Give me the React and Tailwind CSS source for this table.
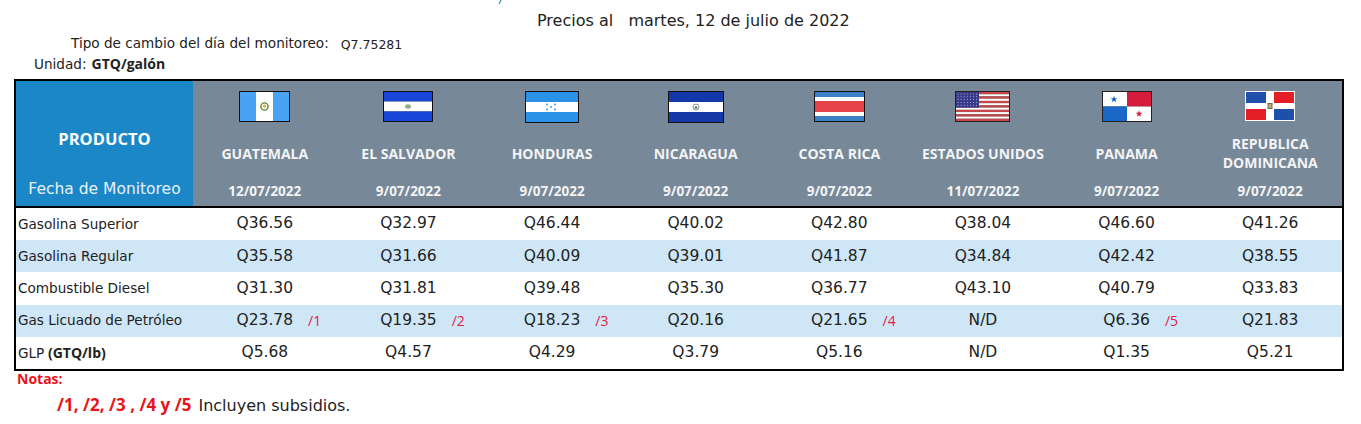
import React from 'react';

const countries = [
  { name: 'GUATEMALA', date: '12/07/2022', flag: 'gt' },
  { name: 'EL SALVADOR', date: '9/07/2022', flag: 'sv' },
  { name: 'HONDURAS', date: '9/07/2022', flag: 'hn' },
  { name: 'NICARAGUA', date: '9/07/2022', flag: 'ni' },
  { name: 'COSTA RICA', date: '9/07/2022', flag: 'cr' },
  { name: 'ESTADOS UNIDOS', date: '11/07/2022', flag: 'us' },
  { name: 'PANAMA', date: '9/07/2022', flag: 'pa' },
  { name: 'REPUBLICA DOMINICANA', date: '9/07/2022', flag: 'do', twoLines: true },
];

const rows = [
  { label: 'Gasolina Superior', values: ['Q36.56', 'Q32.97', 'Q46.44', 'Q40.02', 'Q42.80', 'Q38.04', 'Q46.60', 'Q41.26'] },
  { label: 'Gasolina Regular', values: ['Q35.58', 'Q31.66', 'Q40.09', 'Q39.01', 'Q41.87', 'Q34.84', 'Q42.42', 'Q38.55'], shaded: true },
  { label: 'Combustible Diesel', values: ['Q31.30', 'Q31.81', 'Q39.48', 'Q35.30', 'Q36.77', 'Q43.10', 'Q40.79', 'Q33.83'] },
  {
    label: 'Gas Licuado de Petróleo',
    values: ['Q23.78', 'Q19.35', 'Q18.23', 'Q20.16', 'Q21.65', 'N/D', 'Q6.36', 'Q21.83'],
    notes: ['/1', '/2', '/3', null, '/4', null, '/5', null],
    shaded: true,
  },
  { label: 'GLP', unit: '(GTQ/lb)', values: ['Q5.68', 'Q4.57', 'Q4.29', 'Q3.79', 'Q5.16', 'N/D', 'Q1.35', 'Q5.21'] },
];

function Flag({ code }) {
  if (code === 'gt') {
    return (
      <svg width="51" height="31" viewBox="0 0 51 31">
        <rect width="51" height="31" fill="#111" />
        <rect x="1" y="1" width="16" height="29" fill="#4aa2f5" />
        <rect x="17" y="1" width="17" height="29" fill="#fff" />
        <rect x="34" y="1" width="16" height="29" fill="#4aa2f5" />
        <circle cx="25.5" cy="15.5" r="3.6" fill="none" stroke="#5a8a2a" strokeWidth="1.4" />
        <circle cx="25.5" cy="15.3" r="1.7" fill="#d9b54a" />
      </svg>
    );
  }
  if (code === 'sv') {
    return (
      <svg width="50" height="31" viewBox="0 0 50 31">
        <rect width="50" height="31" fill="#111" />
        <rect x="1" y="1" width="48" height="9.5" fill="#1846d8" />
        <rect x="1" y="10.5" width="48" height="10" fill="#fff" />
        <rect x="1" y="20.5" width="48" height="9.5" fill="#1846d8" />
        <ellipse cx="25" cy="15.5" rx="3" ry="2.2" fill="#8fae8a" />
      </svg>
    );
  }
  if (code === 'hn') {
    return (
      <svg width="54" height="32" viewBox="0 0 54 32">
        <rect width="54" height="32" fill="#111" />
        <rect x="1" y="1" width="52" height="10" fill="#2a93e8" />
        <rect x="1" y="11" width="52" height="10" fill="#fff" />
        <rect x="1" y="21" width="52" height="10" fill="#2a93e8" />
        {[[22, 13.5], [30, 13.5], [26, 16], [22, 18.5], [30, 18.5]].map(([x, y]) => (
          <circle key={`${x}-${y}`} cx={x} cy={y} r="0.9" fill="#2a93e8" />
        ))}
      </svg>
    );
  }
  if (code === 'ni') {
    return (
      <svg width="56" height="32" viewBox="0 0 56 32">
        <rect width="56" height="32" fill="#111" />
        <rect x="1" y="1" width="54" height="10" fill="#1538a8" />
        <rect x="1" y="11" width="54" height="10" fill="#fff" />
        <rect x="1" y="21" width="54" height="10" fill="#1538a8" />
        <circle cx="28" cy="16" r="3" fill="none" stroke="#8a8a6a" strokeWidth="0.9" />
        <path d="M26 17.4 L28 14.4 L30 17.4 Z" fill="#4a7a9a" />
      </svg>
    );
  }
  if (code === 'cr') {
    return (
      <svg width="51" height="31" viewBox="0 0 51 31">
        <rect width="51" height="31" fill="#111" />
        <rect x="1" y="1" width="49" height="5" fill="#3b7fc4" />
        <rect x="1" y="6" width="49" height="4" fill="#fff" />
        <rect x="1" y="10" width="49" height="11" fill="#e4434a" />
        <rect x="1" y="21" width="49" height="4" fill="#fff" />
        <rect x="1" y="25" width="49" height="5" fill="#3b7fc4" />
      </svg>
    );
  }
  if (code === 'us') {
    return (
      <svg width="55" height="31" viewBox="0 0 55 31">
        <rect width="55" height="31" fill="#222" />
        {Array.from({ length: 13 }).map((_, i) => (
          <rect key={i} x="1" y={1 + i * (29 / 13)} width="53" height={29 / 13} fill={i % 2 === 0 ? '#c8464a' : '#fff'} />
        ))}
        <rect x="1" y="1" width="23" height="15.6" fill="#3a3a8a" />
        {Array.from({ length: 5 }).map((_, r) =>
          Array.from({ length: 7 }).map((_, c) => (
            <circle key={`${r}-${c}`} cx={3 + c * 3.1} cy={3 + r * 2.8} r="0.5" fill="#c9c9ee" />
          ))
        )}
      </svg>
    );
  }
  if (code === 'pa') {
    return (
      <svg width="50" height="31" viewBox="0 0 50 31">
        <rect width="50" height="31" fill="#222" />
        <rect x="1" y="1" width="24" height="14.5" fill="#fff" />
        <rect x="25" y="1" width="24" height="14.5" fill="#d61b3c" />
        <rect x="1" y="15.5" width="24" height="14.5" fill="#1a68c6" />
        <rect x="25" y="15.5" width="24" height="14.5" fill="#fff" />
        <path d="M12 4.8 L12.9 7.3 L15.4 7.3 L13.4 8.8 L14.2 11.2 L12 9.7 L9.8 11.2 L10.6 8.8 L8.6 7.3 L11.1 7.3 Z" fill="#1a68c6" />
        <path d="M37 19.3 L37.9 21.8 L40.4 21.8 L38.4 23.3 L39.2 25.7 L37 24.2 L34.8 25.7 L35.6 23.3 L33.6 21.8 L36.1 21.8 Z" fill="#d61b3c" />
      </svg>
    );
  }
  return (
    <svg width="50" height="30" viewBox="0 0 50 30">
      <rect width="50" height="30" fill="#fff" />
      <rect x="1" y="1" width="20" height="11" fill="#1f4fa8" />
      <rect x="29" y="1" width="20" height="11" fill="#e41e26" />
      <rect x="1" y="18" width="20" height="11" fill="#e41e26" />
      <rect x="29" y="18" width="20" height="11" fill="#1f4fa8" />
      <rect x="22.5" y="12" width="5" height="6" fill="#7b6a4a" />
      <rect x="23.5" y="13" width="3" height="4" fill="#b8a97a" />
    </svg>
  );
}

export default function App() {
  return (
    <div className="relative h-[424px] w-[1361px] overflow-hidden bg-white font-['DejaVu_Sans',sans-serif] text-[#222]">
      {/* clipped blue mark at the very top */}
      <svg className="absolute left-[497px] top-0" width="6" height="5" viewBox="0 0 6 5">
        <path d="M5 -2 L2 4" stroke="#3a8fd0" strokeWidth="1.2" />
      </svg>

      <div className="pl-[537px] pt-[9px] text-[16px] leading-[24px]">
        Precios al&nbsp;&nbsp; martes, 12 de julio de 2022
      </div>

      <div className="flex items-end pl-[71px] text-[13.6px] leading-[20px]">
        <span>Tipo de cambio del día del monitoreo:</span>
        <span className="ml-[12px] translate-y-[2px] text-[12.5px]">Q7.75281</span>
      </div>

      <div className="mt-[1px] flex items-baseline pl-[34px] text-[13.6px] leading-[20px]">
        <span>Unidad:</span>
        <span className="ml-[5px] font-['Open_Sans',sans-serif] text-[14px] font-bold">GTQ/galón</span>
      </div>

      <div className="ml-[14px] mt-[5px] w-[1330px] border-2 border-black">
        <div className="grid grid-cols-[177px_repeat(8,1fr)] border-b-2 border-black font-['Open_Sans',sans-serif]">
          <div className="flex h-[125px] flex-col items-center bg-[#1b87c7] text-white">
            <div className="mt-[48px] flex h-[20px] items-center text-[16.5px] font-bold">PRODUCTO</div>
            <div className="mt-[32px] flex h-[18px] items-center font-['DejaVu_Sans',sans-serif] text-[15.5px] text-[#e6f2fb]">
              Fecha de Monitoreo
            </div>
          </div>
          {countries.map((c) => (
            <div key={c.name} className="flex h-[125px] flex-col items-center bg-[#778899] text-[#f4f4f4]">
              <div className="mt-[10px] flex h-[33px] items-start">
                <Flag code={c.flag} />
              </div>
              <div className="flex h-[58px] items-center text-center text-[14px] font-bold leading-[19px]">
                {c.twoLines ? (
                  <span>
                    REPUBLICA
                    <br />
                    DOMINICANA
                  </span>
                ) : (
                  c.name
                )}
              </div>
              <div className="flex h-[18px] items-center text-[13.5px] font-bold">{c.date}</div>
            </div>
          ))}
        </div>

        {rows.map((row) => (
          <div
            key={row.label}
            className={`grid h-[32.2px] grid-cols-[177px_repeat(8,1fr)] items-center ${row.shaded ? 'bg-[#cfe6f7]' : 'bg-white'}`}
          >
            <div className="pl-[2px] text-[13.6px]">
              {row.label}
              {row.unit && <span className="font-['Open_Sans',sans-serif] text-[14px] font-bold"> {row.unit}</span>}
            </div>
            {row.values.map((v, i) => (
              <div key={i} className="flex justify-center text-[15.5px]">
                <span className="relative">
                  {v}
                  {row.notes && row.notes[i] && (
                    <span className="absolute left-full top-0 ml-[15px] font-['Open_Sans',sans-serif] text-[14px] leading-[24px] text-[#e3213f]">
                      {row.notes[i]}
                    </span>
                  )}
                </span>
              </div>
            ))}
          </div>
        ))}
      </div>

      <div className="pl-[17px] font-['Open_Sans',sans-serif] text-[14px] font-bold leading-[16px] text-[#e8141c]">Notas:</div>
      <div className="mt-[5px] flex items-baseline pl-[57px]">
        <span className="font-['Open_Sans',sans-serif] text-[17px] font-bold text-[#e8141c]">/1, /2, /3 , /4 y /5</span>
        <span className="ml-[7px] text-[16px]">Incluyen subsidios.</span>
      </div>
    </div>
  );
}
